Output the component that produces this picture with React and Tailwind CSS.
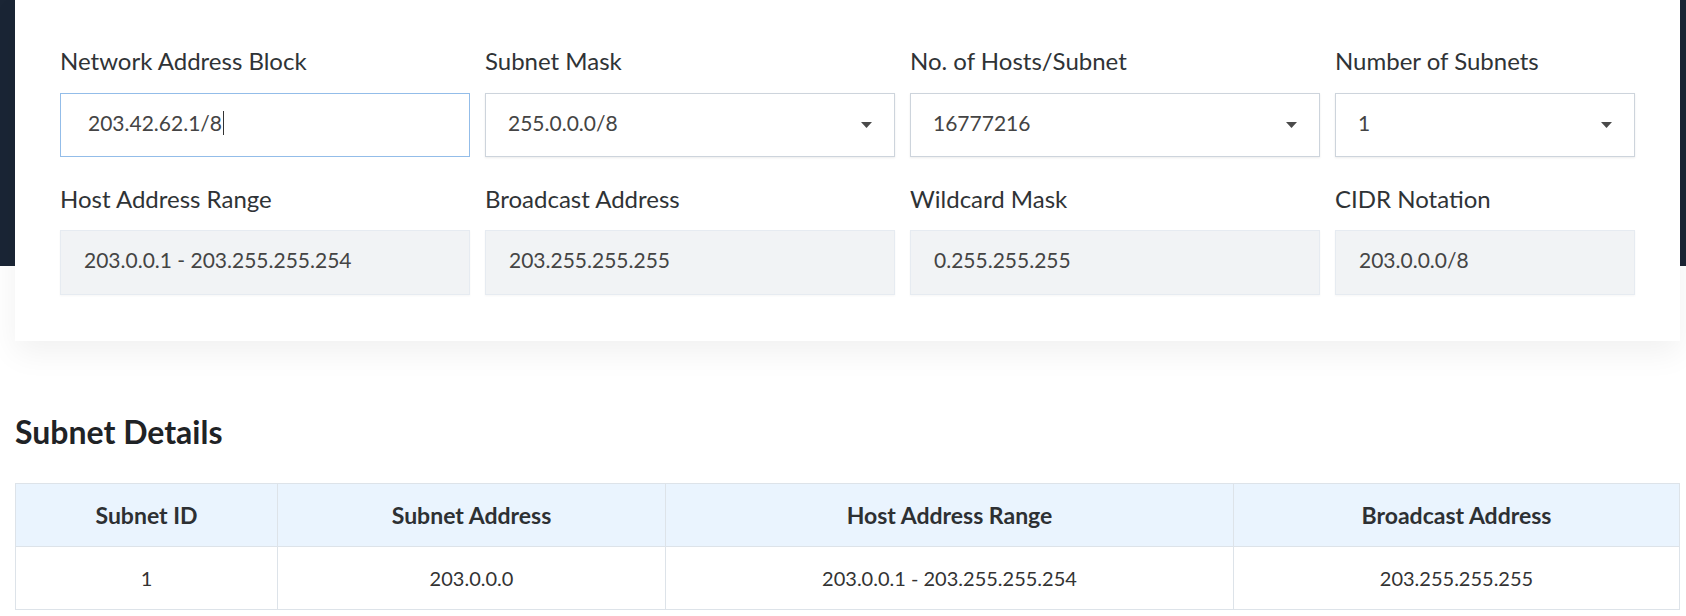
import React from 'react';

const fields = [
  [
    { label: 'Network Address Block', value: '203.42.62.1/8', kind: 'input' },
    { label: 'Subnet Mask', value: '255.0.0.0/8', kind: 'select' },
    { label: 'No. of Hosts/Subnet', value: '16777216', kind: 'select' },
    { label: 'Number of Subnets', value: '1', kind: 'select' },
  ],
  [
    { label: 'Host Address Range', value: '203.0.0.1 - 203.255.255.254', kind: 'readonly' },
    { label: 'Broadcast Address', value: '203.255.255.255', kind: 'readonly' },
    { label: 'Wildcard Mask', value: '0.255.255.255', kind: 'readonly' },
    { label: 'CIDR Notation', value: '203.0.0.0/8', kind: 'readonly' },
  ],
];

const rows = [
  { id: '1', address: '203.0.0.0', range: '203.0.0.1 - 203.255.255.254', broadcast: '203.255.255.255' },
];

const Caret = () => (
  <svg width="11" height="6" viewBox="0 0 11 6" className="shrink-0">
    <path d="M0 0h11L5.5 6z" fill="#4a4a4a" />
  </svg>
);

const Field = ({ label, value, kind }) => {
  return (
    <div className="flex flex-col">
      <label className="text-[24px] leading-[30px] text-[#2f3336] mb-[17px]">{label}</label>
      {kind === 'input' && (
        <div className="h-[64px] border border-[#93bde9] bg-white flex items-center pl-[27px] pb-[5px] text-[21px] text-[#444]">
          {value}
          <span className="inline-block w-px h-[24px] bg-[#333] ml-[1px]"></span>
        </div>
      )}
      {kind === 'select' && (
        <div className="h-[64px] border border-[#cdd4dc] shadow-[0_1px_2px_rgba(0,0,0,0.08)] bg-white flex items-center justify-between pl-[22px] pr-[22px] text-[21px] text-[#444]">
          <span className="pb-[5px]">{value}</span>
          <Caret />
        </div>
      )}
      {kind === 'readonly' && (
        <div className="h-[65px] -mt-[1px] border border-[#e6ebf1] bg-[#f1f3f5] shadow-[0_1px_2px_rgba(0,0,0,0.04)] flex items-center pl-[23px] pb-[5px] text-[21px] text-[#444]">
          {value}
        </div>
      )}
    </div>
  );
};

export default function App() {
  return (
    <div
      className="w-full h-[616px] overflow-hidden bg-[linear-gradient(to_bottom,#1a2535_266px,#ffffff_266px)] pl-[15px] pr-[6px]"
      style={{ fontFamily: 'Lato, "Noto Sans", sans-serif' }}
    >
      {/* Calculator card */}
      <div className="bg-white shadow-[0_12px_30px_rgba(0,0,0,0.06)] pt-[46px] pb-[46px] px-[45px]">
        <div className="flex flex-col gap-[27px]">
          {fields.map((row, i) => (
            <div key={i} className="grid grid-cols-[410px_410px_410px_300px] gap-x-[15px]">
              {row.map((f) => (
                <Field key={f.label} {...f} />
              ))}
            </div>
          ))}
        </div>
      </div>

      {/* Subnet details */}
      <h2 className="mt-[72px] text-[32px] leading-[38px] font-bold text-[#1f2326]">Subnet Details</h2>
      <table className="mt-[32px] w-full table-fixed border-collapse text-[20px] text-[#333]">
        <colgroup>
          <col className="w-[262px]" />
          <col className="w-[388px]" />
          <col className="w-[568px]" />
          <col />
        </colgroup>
        <thead>
          <tr className="bg-[#eaf4fe] h-[63px] text-[23px]">
            <th className="border border-[#dde3e9] font-bold text-[#2d3033]">Subnet ID</th>
            <th className="border border-[#dde3e9] font-bold text-[#2d3033]">Subnet Address</th>
            <th className="border border-[#dde3e9] font-bold text-[#2d3033]">Host Address Range</th>
            <th className="border border-[#dde3e9] font-bold text-[#2d3033]">Broadcast Address</th>
          </tr>
        </thead>
        <tbody>
          {rows.map((r) => (
            <tr key={r.id} className="h-[63px] text-center">
              <td className="border border-[#dde3e9]">{r.id}</td>
              <td className="border border-[#dde3e9]">{r.address}</td>
              <td className="border border-[#dde3e9]">{r.range}</td>
              <td className="border border-[#dde3e9]">{r.broadcast}</td>
            </tr>
          ))}
        </tbody>
      </table>
    </div>
  );
}
